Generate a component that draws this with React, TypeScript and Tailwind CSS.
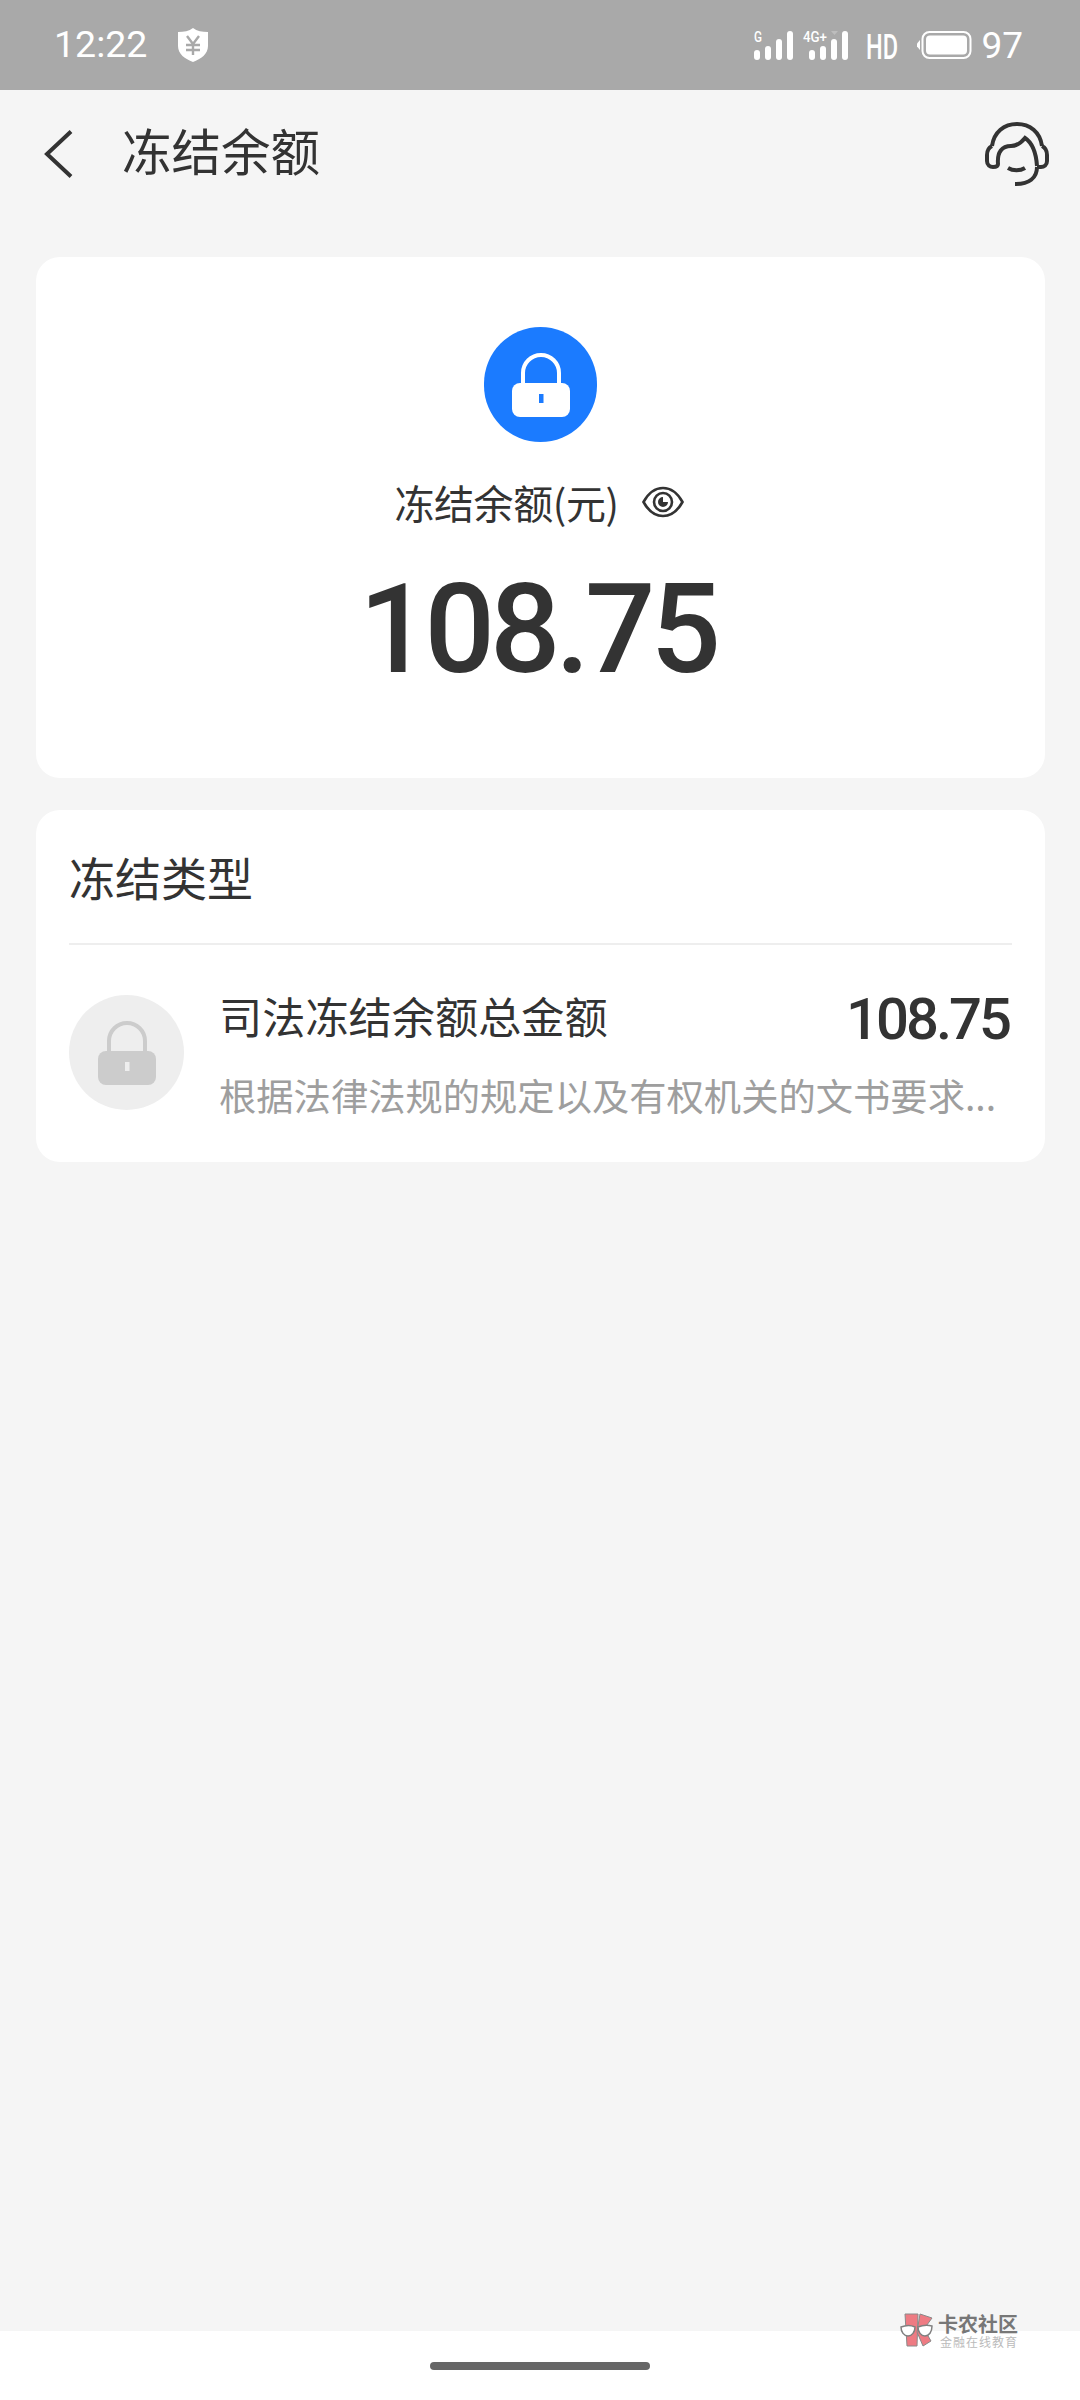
const CJK = "font-['Noto_Sans_CJK_SC','Noto_Sans',sans-serif]";

function LockIcon({ body, hole, className }: { body: string; hole: string; className: string }) {
  return (
    <svg viewBox="0 0 58 64" className={className} aria-hidden>
      <path d="M11 32V20a18 18 0 0 1 36 0v12" fill="none" stroke={body} strokeWidth="4" />
      <rect x="0" y="30" width="58" height="34" rx="8" fill={body} />
      <rect x="27" y="41" width="4.5" height="9" fill={hole} />
    </svg>
  );
}

function StatusIcons() {
  return (
    <svg viewBox="0 0 150 31" className="h-[31px] w-[150px] overflow-visible" aria-hidden>
      <g fill="#fff">
        <text x="1" y="12" fontFamily="Roboto" fontSize="15" fontWeight="500" textLength="8" lengthAdjust="spacingAndGlyphs">G</text>
        <rect x="1" y="20" width="6" height="10" rx="3" />
        <rect x="12" y="16" width="6" height="14" rx="3" />
        <rect x="23" y="9" width="6" height="21" rx="3" />
        <rect x="34" y="1" width="6" height="29" rx="3" />
        <text x="50" y="12" fontFamily="Roboto" fontSize="15" fontWeight="500" textLength="24" lengthAdjust="spacingAndGlyphs">4G+</text>
        <rect x="56" y="20" width="6" height="10" rx="3" />
        <rect x="67" y="16" width="6" height="14" rx="3" />
        <rect x="78" y="9" width="6" height="21" rx="3" />
        <rect x="89" y="1" width="6" height="29" rx="3" />
        <text x="113" y="29" fontFamily="Roboto" fontSize="35" fontWeight="500" textLength="32" lengthAdjust="spacingAndGlyphs">HD</text>
      </g>
      <path d="M78 1h7l-3.5 4z" fill="#bdbdbd" />
    </svg>
  );
}

function Battery() {
  return (
    <svg viewBox="0 0 56 28" className="h-[28px] w-[56px]" aria-hidden>
      <path d="M4 9v10L1 15.5v-3z" fill="#fff" />
      <rect x="6.5" y="1" width="48" height="26" rx="7" fill="none" stroke="#fff" strokeWidth="2" />
      <rect x="10" y="4.5" width="41" height="19" rx="4" fill="#fff" />
    </svg>
  );
}

function Headset() {
  return (
    <svg viewBox="0 0 64 64" className="h-16 w-16" fill="none" stroke="#333" strokeWidth="4" aria-hidden>
      <path d="M7 24C9 10 19 2 32 2s23 8 25 22" />
      <path d="M7 24C3 26 2 29 2 33v6c0 4 3 6 6 6s5-1 5-3C12 30 17 24 26 24c6 0 10-3 14-8 6 4 11 13 12 28" />
      <path d="M57 24c4 2 5 5 5 9v6c0 4-3 6-6 6h-4" />
      <path d="M52 45c0 11-8 17-22 17" />
      <path d="M23 46c5 3 12 3 17 0" />
    </svg>
  );
}

function KanongLogo() {
  return (
    <svg viewBox="0 0 34 36" className="-mt-[2px] h-[36px] w-[34px]" aria-hidden>
      <path d="M5 2h13l-1 32H7z" fill="#ee7b83" stroke="#8a8a8a" strokeWidth="1" />
      <path d="M20 2l12 4-8 11 7 12-8 5-6-14z" fill="#ee7b83" stroke="#8a8a8a" strokeWidth="1" />
      <path d="M1 15c5-2 10-2 14 0 0 5-3 9-7 9s-7-4-7-9zM18 15c5-2 10-2 14-1 0 6-3 10-7 10s-7-4-7-9z" fill="#fff" stroke="#808080" strokeWidth="1.5" />
    </svg>
  );
}

export default function App() {
  return (
    <div className={`relative flex h-[2400px] w-[1080px] flex-col bg-[#f5f5f5] text-[#333] ${CJK}`}>
      <div className="flex h-[90px] shrink-0 items-center bg-[#a9a9a9] pl-[54px] pr-[57px] text-white">
        <span className="font-['Roboto',sans-serif] text-[37.5px] leading-none">12:22</span>
        <svg viewBox="0 0 30 34" className="ml-[31px] h-[34px] w-[30px]" aria-hidden>
          <path d="M15 0c4 3 9 4 15 4v14c0 8-7 13-15 16C7 31 0 26 0 18V4c6 0 11-1 15-4z" fill="#fff" />
          <path d="M9 8l6 8 6-8M8 17h14M8 22h14M15 16v11" fill="none" stroke="#a9a9a9" strokeWidth="2.4" />
        </svg>
        <div className="ml-auto flex items-center">
          <StatusIcons />
          <span className="ml-[13px]"><Battery /></span>
          <span className="ml-[9px] font-['Roboto',sans-serif] text-[37px] leading-none">97</span>
        </div>
      </div>

      <div className="flex h-[124px] shrink-0 items-center pl-[44px] pr-[31px]">
        <svg viewBox="0 0 30 48" className="mt-[4px] h-[48px] w-[30px]" fill="none" stroke="#333" strokeWidth="4" aria-hidden>
          <path d="M27 1.5L3 24l24 22.5" />
        </svg>
        <h1 className="-mt-[4px] ml-[48px] text-[49.5px] font-normal leading-none">冻结余额</h1>
        <div className="ml-auto mt-[3px]"><Headset /></div>
      </div>

      <div className="flex flex-1 flex-col gap-[32px] pl-[36px] pr-[35px] pt-[43px]">
        <section className="flex h-[521px] flex-col items-center rounded-[24px] bg-white pt-[70px]">
          <div className="flex h-[115px] w-[113px] items-center justify-center rounded-full bg-[#1b7bff]">
            <LockIcon body="#fff" hole="#1b7bff" className="h-[64px] w-[58px]" />
          </div>
          <div className="mt-[37px] flex h-[46px] items-center pr-[3px]">
            <span className="text-[40px] font-normal leading-none tracking-[-0.4px]">冻结余额(元)</span>
            <svg viewBox="0 0 42 32" className="ml-[23px] h-[32px] w-[42px]" fill="none" stroke="#333" strokeWidth="2.6" aria-hidden>
              <path d="M1.5 16C7 6 14 2 21 2s14 4 19.5 14C35 26 28 30 21 30S7 26 1.5 16z" />
              <circle cx="21" cy="16" r="9" />
              <path d="M21 11a5 5 0 1 0 5 5h-5z" fill="#333" stroke="none" />
            </svg>
          </div>
          <p className="mt-[43px] pr-[6px] font-['Roboto',sans-serif] text-[124px] font-medium leading-none tracking-[-5px]">108.75</p>
        </section>

        <section className="flex h-[352px] flex-col rounded-[24px] bg-white px-[33px]">
          <h2 className="flex h-[135px] shrink-0 items-center border-b-2 border-[#eeeeee] pb-[2px] text-[46px] font-normal leading-none">冻结类型</h2>
          <div className="flex flex-1 items-start pt-[50px]">
            <div className="flex h-[115px] w-[115px] shrink-0 items-center justify-center rounded-full bg-[#eeeeee]">
              <LockIcon body="#cccccc" hole="#eeeeee" className="h-[64px] w-[58px]" />
            </div>
            <div className="-mt-[5px] ml-[35px] min-w-0 flex-1">
              <div className="flex items-start justify-between pr-[3px]">
                <span className="mt-[4px] text-[43.2px] leading-none">司法冻结余额总金额</span>
                <span className="font-['Roboto',sans-serif] text-[58px] font-medium leading-none tracking-[-3px]">108.75</span>
              </div>
              <p className="mt-[29px] whitespace-nowrap text-[37.3px] font-normal leading-none text-[#9e9e9e]">根据法律法规的规定以及有权机关的文书要求...</p>
            </div>
          </div>
        </section>
      </div>

      <div className="flex h-[69px] shrink-0 items-start justify-center bg-white pt-[31px]">
        <div className="h-[8px] w-[220px] rounded-full bg-[#666]" />
      </div>

      <div className="absolute left-[900px] top-[2314px] flex items-start">
        <KanongLogo />
        <div className="ml-[4px] flex flex-col">
          <span className="text-[20px] font-bold leading-[20px] text-[#777]">卡农社区</span>
          <span className="ml-[2px] mt-[1px] text-[12px] leading-[13px] tracking-[1px] text-[#bbb]">金融在线教育</span>
        </div>
      </div>
    </div>
  );
}
